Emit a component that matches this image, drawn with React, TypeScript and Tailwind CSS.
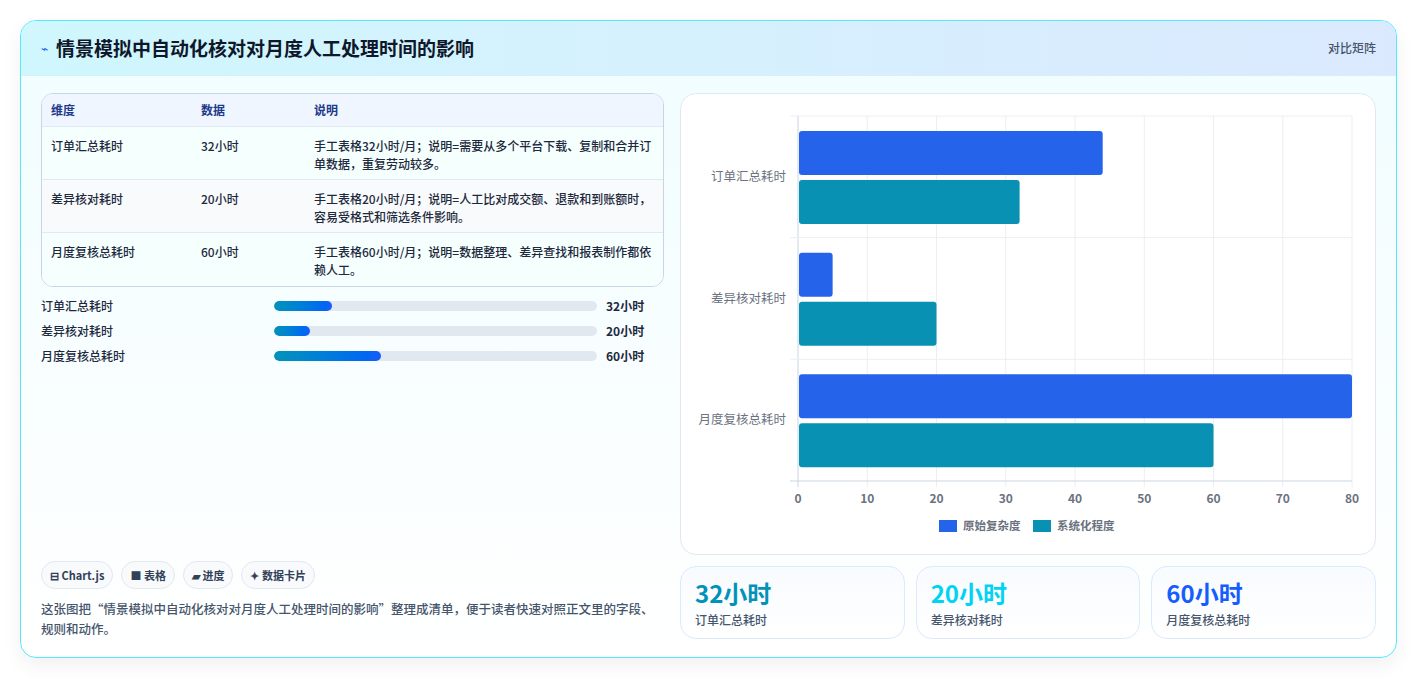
const rows = [
  { k: "订单汇总耗时", v: "32小时", d: "手工表格32小时/月；说明=需要从多个平台下载、复制和合并订单数据，重复劳动较多。", p: 18 },
  { k: "差异核对耗时", v: "20小时", d: "手工表格20小时/月；说明=人工比对成交额、退款和到账额时，容易受格式和筛选条件影响。", p: 11 },
  { k: "月度复核总耗时", v: "60小时", d: "手工表格60小时/月；说明=数据整理、差异查找和报表制作都依赖人工。", p: 33 },
];

const chartData = [
  { label: "订单汇总耗时", a: 44, b: 32 },
  { label: "差异核对耗时", a: 5, b: 20 },
  { label: "月度复核总耗时", a: 80, b: 60 },
];

function Chart() {
  const x0 = 117, x1 = 671, top = 22, bottom = 387;
  const sx = (v: number) => x0 + ((x1 - x0) * v) / 80;
  const band = (bottom - top) / 3;
  return (
    <svg width="694" height="461" className="block">
      {[0, 10, 20, 30, 40, 50, 60, 70, 80].map((t) => (
        <g key={t}>
          <line x1={sx(t)} x2={sx(t)} y1={top} y2={bottom + 6} stroke={t === 0 ? "#cbd5e1" : "#eceef2"} />
          <text x={sx(t)} y={bottom + 22} textAnchor="middle" fontSize="12" fontWeight="600" fill="#6b7280">{t}</text>
        </g>
      ))}
      {[0, 1, 2, 3].map((i) => (
        <line key={i} x1={x0 - 8} x2={x1} y1={top + band * i} y2={top + band * i} stroke={i === 3 ? "#cbd5e1" : "#eceef2"} />
      ))}
      {chartData.map((c, i) => {
        const y = top + band * i;
        return (
          <g key={c.label}>
            <rect x={x0 + 1} y={y + 15} width={sx(c.a) - x0 - 1} height={44} rx="3" fill="#2563eb" />
            <rect x={x0 + 1} y={y + 64} width={sx(c.b) - x0 - 1} height={44} rx="3" fill="#0891b2" />
            <text x={x0 - 12} y={y + band / 2 + 4} textAnchor="end" fontSize="12.5" fill="#6b7280">{c.label}</text>
          </g>
        );
      })}
      <rect x="258" y="426" width="18" height="12" fill="#2563eb" />
      <text x="282" y="436" fontSize="11.5" fontWeight="600" fill="#6b7280">原始复杂度</text>
      <rect x="352" y="426" width="18" height="12" fill="#0891b2" />
      <text x="376" y="436" fontSize="11.5" fontWeight="600" fill="#6b7280">系统化程度</text>
    </svg>
  );
}

export default function App() {
  return (
    <div className="min-h-[679px] bg-white pt-5 px-5 pb-5" style={{ fontFamily: '"Noto Sans CJK SC", "Noto Sans", sans-serif' }}>
      <div className="w-[1377px] h-[638px] rounded-2xl border border-cyan-300 overflow-hidden bg-gradient-to-b from-[#f0fdff] to-white shadow-[0_8px_20px_rgba(0,0,0,0.06)] flex flex-col">
        <div className="h-[55px] shrink-0 flex items-center justify-between px-5 bg-gradient-to-r from-[#cff7fd] to-[#dbe9fe] border-b border-[#d6f0f8]">
          <div className="flex items-center gap-2">
            <span className="text-[12px] text-blue-600">⌁</span>
            <h1 className="text-[19px] font-bold text-[#0f172a]">情景模拟中自动化核对对月度人工处理时间的影响</h1>
          </div>
          <span className="text-[12px] text-slate-600 font-medium">对比矩阵</span>
        </div>
        <div className="flex-1 flex gap-4 px-5 pt-[17px] pb-[18px]">
          <div className="w-[628px] flex flex-col">
            <div className="rounded-xl border border-slate-300 overflow-hidden bg-white">
              <div className="flex h-[33px] items-center bg-[#eff6ff] border-b border-slate-200 text-[12px] font-bold text-[#1e3a8a] px-[9px]">
                <div className="w-[150px]">维度</div>
                <div className="w-[113px]">数据</div>
                <div className="flex-1">说明</div>
              </div>
              {rows.map((r, i) => (
                <div key={r.k} className={`flex px-[9px] pt-[10px] pb-[7px] h-[53px] text-[12px] font-medium text-slate-800 leading-[18px] ${i < 2 ? "border-b border-slate-200" : ""} ${i === 1 ? "bg-slate-50" : "bg-[#f5fffe]"}`}>
                  <div className="w-[150px]">{r.k}</div>
                  <div className="w-[113px]">{r.v}</div>
                  <div className="flex-1">{r.d}</div>
                </div>
              ))}
            </div>
            <div className="mt-[10px] flex flex-col gap-[7px]">
              {rows.map((r) => (
                <div key={r.k} className="flex items-center h-[18px] text-[12px] font-medium text-slate-800">
                  <div className="w-[233px]">{r.k}</div>
                  <div className="w-[323px] h-[10px] rounded-full bg-slate-200 overflow-hidden">
                    <div className="h-full rounded-full bg-gradient-to-r from-cyan-600 to-blue-600" style={{ width: `${r.p}%` }} />
                  </div>
                  <div className="ml-[9px] font-bold">{r.v}</div>
                </div>
              ))}
            </div>
            <div className="mt-auto flex gap-2">
              {["⊟ Chart.js", "■ 表格", "▰ 进度", "✦ 数据卡片"].map((t) => (
                <span key={t} className="h-[28px] px-[8px] flex items-center rounded-full border border-slate-200 bg-slate-50 text-[11px] font-bold text-slate-700">{t}</span>
              ))}
            </div>
            <p className="mt-[10px] text-[12.5px] leading-[20px] font-medium text-slate-600">这张图把“情景模拟中自动化核对对月度人工处理时间的影响”整理成清单，便于读者快速对照正文里的字段、规则和动作。</p>
          </div>
          <div className="flex-1 flex flex-col gap-[11px]">
            <div className="h-[462px] rounded-2xl border border-slate-200 bg-white overflow-hidden">
              <Chart />
            </div>
            <div className="grid grid-cols-3 gap-[11px]">
              {[
                { v: "32小时", k: "订单汇总耗时", c: "text-cyan-600" },
                { v: "20小时", k: "差异核对耗时", c: "text-cyan-400" },
                { v: "60小时", k: "月度复核总耗时", c: "text-blue-600" },
              ].map((s) => (
                <div key={s.k} className="h-[73px] rounded-2xl border border-blue-100 bg-gradient-to-b from-[#f8fbff] to-white px-[14px] pt-[8px]">
                  <div className={`text-[24px] font-bold leading-[36px] ${s.c}`}>{s.v}</div>
                  <div className="text-[12px] font-medium text-slate-600">{s.k}</div>
                </div>
              ))}
            </div>
          </div>
        </div>
      </div>
    </div>
  );
}
